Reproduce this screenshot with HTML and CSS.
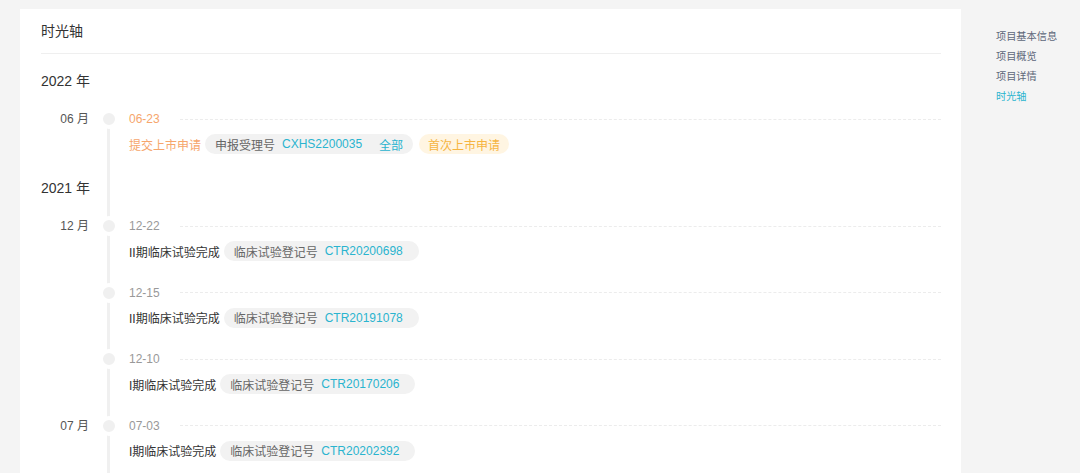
FILE: index.html
```html
<!doctype html>
<html>

<head>
    <title>时光轴</title>
    <meta charset="utf-8">
    <link rel="stylesheet" href="styles.css">
</head>

<body>
    <div class="page">
        <section class="card">
            <div class="card-head">时光轴</div>
            <div class="timeline">
                <div class="year">2022 年</div>
                <div class="entry">
                    <div class="month">06 月</div>
                    <div class="axis"><span class="dot"></span></div>
                    <div class="body">
                        <div class="date-row"><span class="date hot">06-23</span><span class="dash"></span></div>
                        <div class="event">
                            <span class="what hot">提交上市申请</span>
                            <span class="pill"><span class="label">申报受理号</span><span class="num">CXHS2200035</span><span class="scope">全部</span></span>
                            <span class="pill yellow">首次上市申请</span>
                        </div>
                    </div>
                </div>

                <div class="year next">2021 年</div>
                <div class="entry">
                    <div class="month">12 月</div>
                    <div class="axis"><span class="dot"></span></div>
                    <div class="body">
                        <div class="date-row"><span class="date">12-22</span><span class="dash"></span></div>
                        <div class="event">
                            <span class="what">II期临床试验完成</span>
                            <span class="pill"><span class="label">临床试验登记号</span><span class="num">CTR20200698</span></span>
                        </div>
                    </div>
                </div>
                <div class="entry">
                    <div class="month"></div>
                    <div class="axis"><span class="dot"></span></div>
                    <div class="body">
                        <div class="date-row"><span class="date">12-15</span><span class="dash"></span></div>
                        <div class="event">
                            <span class="what">II期临床试验完成</span>
                            <span class="pill"><span class="label">临床试验登记号</span><span class="num">CTR20191078</span></span>
                        </div>
                    </div>
                </div>
                <div class="entry">
                    <div class="month"></div>
                    <div class="axis"><span class="dot"></span></div>
                    <div class="body">
                        <div class="date-row"><span class="date">12-10</span><span class="dash"></span></div>
                        <div class="event">
                            <span class="what">I期临床试验完成</span>
                            <span class="pill"><span class="label">临床试验登记号</span><span class="num">CTR20170206</span></span>
                        </div>
                    </div>
                </div>
                <div class="entry">
                    <div class="month">07 月</div>
                    <div class="axis"><span class="dot"></span></div>
                    <div class="body">
                        <div class="date-row"><span class="date">07-03</span><span class="dash"></span></div>
                        <div class="event">
                            <span class="what">I期临床试验完成</span>
                            <span class="pill"><span class="label">临床试验登记号</span><span class="num">CTR20202392</span></span>
                        </div>
                    </div>
                </div>
            </div>
        </section>

        <nav class="side">
            <a>项目基本信息</a>
            <a>项目概览</a>
            <a>项目详情</a>
            <a class="on">时光轴</a>
        </nav>
    </div>
</body>

</html>
```

FILE: styles.css
```css
body {
    margin: 0;
    background-color: #f4f4f4;
    font-family: "Liberation Sans", "Noto Sans CJK SC", sans-serif;
    color: #333;
}

.page {
    display: flex;
    align-items: flex-start;
    padding: 9px 0 0 20px;
}

.card {
    width: 941px;
    box-sizing: border-box;
    padding: 0 20px 0 21px;
    background-color: #fff;
}

.card-head {
    height: 44px;
    line-height: 44px;
    font-size: 14px;
    border-bottom: 1px solid #efefef;
}

.timeline {
    position: relative;
    padding: 17px 0 40px;
}

/* the axis line, dots sit on top of it */
.timeline::before {
    content: "";
    position: absolute;
    left: 66px;
    top: 64px;
    bottom: 0;
    width: 3px;
    background-color: #f0f0f0;
}

.year {
    font-size: 14px;
    line-height: 20px;
    margin-bottom: 18px;
}

.year.next {
    padding-top: 2.5px;
}

.entry {
    display: flex;
    margin-bottom: 21.5px;
    font-size: 12px;
}

.month {
    width: 48px;
    line-height: 20px;
    text-align: right;
    color: #555;
}

.axis {
    width: 40px;
    position: relative;
}

.dot {
    display: block;
    width: 12px;
    height: 12px;
    margin-left: 10px;
    border: 4px solid #fff;
    border-radius: 50%;
    background-color: #f0f0f0;
}

.body {
    flex: 1;
}

.date-row {
    display: flex;
    align-items: center;
    height: 20px;
}

.date {
    color: #999;
}

.dash {
    flex: 1;
    margin-left: 20px;
    border-top: 1px dashed #ececec;
}

.hot {
    color: #f6a66c;
}

.event {
    display: flex;
    align-items: center;
    height: 20px;
    margin-top: 5px;
}

.what {
    margin-right: 4px;
}

.pill {
    display: inline-flex;
    align-items: center;
    height: 20px;
    padding: 0 10px;
    margin-right: 6px;
    border-radius: 10px;
    background-color: #f2f2f2;
}

.label {
    color: #666;
    margin-right: 7px;
}

.num {
    color: #2ab4cf;
    margin-right: 6px;
}

.scope {
    color: #2ab4cf;
    margin-left: 11px;
}

.pill.yellow {
    background-color: #fff5e2;
    color: #f6b441;
    padding: 0 9px;
}

.side {
    margin-left: 35px;
    padding-top: 18px;
    display: flex;
    flex-direction: column;
}

.side a {
    font-size: 10.2px;
    line-height: 20px;
    color: #5d6779;
}

.side a.on {
    color: #2ab4cf;
}
```
